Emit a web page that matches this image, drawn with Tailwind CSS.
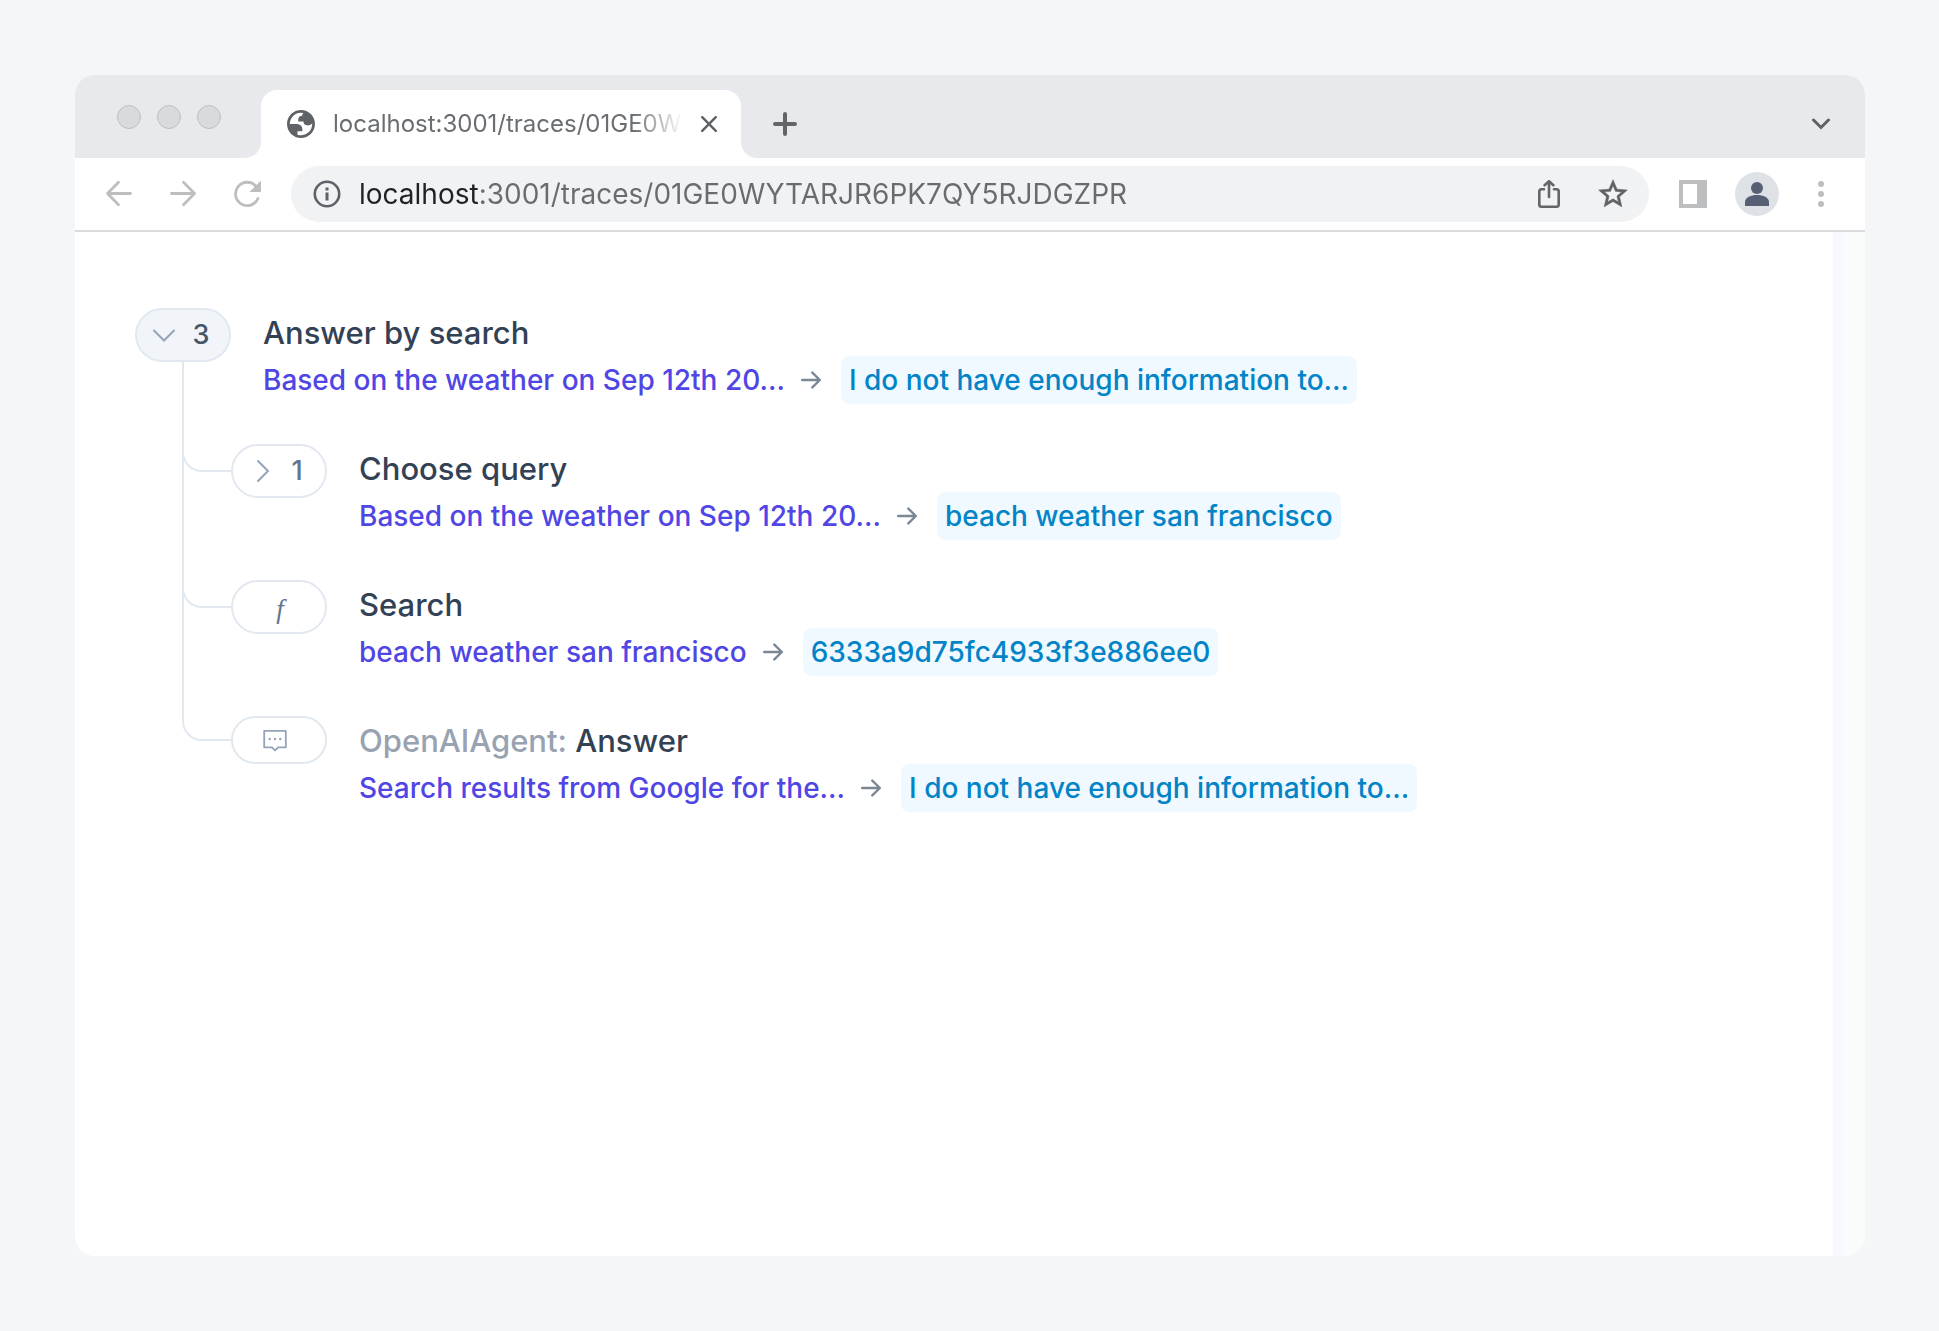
<!DOCTYPE html>
<html lang="en">
<head>
<meta charset="utf-8">
<title>Traces</title>
<script src="https://cdn.jsdelivr.net/npm/@tailwindcss/browser@4"></script>
</head>
<body class="min-h-screen flex flex-col bg-[#f5f6f8] p-[75px] pr-[74px] font-['Inter',sans-serif]">
<div class="flex-1 flex flex-col rounded-[20px] overflow-hidden bg-white">

  <!-- Tab strip -->
  <header class="flex h-[83px] bg-[#e8e9ed]">
    <div class="bg-white">
      <div class="flex h-full w-[186px] gap-4 bg-[#e8e9ed] rounded-br-2xl pl-[42px] pt-[30px]">
        <span class="size-6 rounded-full bg-[#d9dadc] border border-[#bfc0c2]"></span>
        <span class="size-6 rounded-full bg-[#d9dadc] border border-[#bfc0c2]"></span>
        <span class="size-6 rounded-full bg-[#d9dadc] border border-[#bfc0c2]"></span>
      </div>
    </div>
    <div class="pt-[15px]">
      <div class="flex items-center h-[68px] w-[480px] bg-white rounded-t-2xl pl-[26px] pr-4">
        <svg class="size-7 shrink-0" viewBox="2 2 20 20" fill="#5f6368"><path fill-rule="evenodd" d="M12 2C6.480 2 2 6.480 2 12s4.480 10 10 10 10-4.480 10-10S17.520 2 12 2zM4 12h4.400c3.407.022 4.922 1.730 4.543 5.127H9.488v2.470a8.004 8.004 0 0 0 10.498-8.080C19.327 12.506 18.332 13 17 13c-2.137 0-3.206-.916-3.206-2.750h-3.748c-.274-2.728.683-4.092 2.870-4.092 0-.975.327-1.597.811-1.970A8.004 8.004 0 0 0 4 12z"/></svg>
        <span class="ml-[18px] w-[352px] whitespace-nowrap text-2xl leading-8 text-[#6a6e72] [mask-image:linear-gradient(to_right,#000_300px,transparent_350px)]">localhost:3001/traces/01GE0W</span>
        <button class="grid place-items-center size-8 ml-2 shrink-0" aria-label="Close tab"><svg class="size-4" viewBox="0 0 16 16" fill="none" stroke="#5f6265" stroke-width="2.400" stroke-linecap="round"><path d="M1.200 1.200 14.800 14.800M14.800 1.200 1.200 14.800"/></svg></button>
      </div>
    </div>
    <div class="flex-1 bg-white">
      <div class="flex h-full items-center justify-between bg-[#e8e9ed] rounded-bl-2xl pl-3 pr-3 pt-[15px]">
        <button class="grid place-items-center w-16 h-16" aria-label="New tab"><svg class="size-6" viewBox="0 0 24 24" stroke="#636669" stroke-width="4" stroke-linecap="round"><path d="M12 2V22M2 12H22"/></svg></button>
        <button class="grid place-items-center w-16 h-16" aria-label="Search tabs"><svg class="w-[18px] h-3" viewBox="0 0 18 12" fill="none" stroke="#5f6265" stroke-width="3" stroke-linecap="round"><path d="M1.500 2 9 9.500 16.500 2"/></svg></button>
      </div>
    </div>
  </header>

  <!-- Toolbar -->
  <nav class="flex items-center h-[74px] px-3 border-b-2 border-[#d9dbde] bg-white">
    <button class="grid place-items-center w-16 h-14" aria-label="Back"><svg class="size-7" viewBox="0 0 28 28" fill="none" stroke="#bdbec0" stroke-width="2.800" stroke-linecap="round" stroke-linejoin="round"><path d="M25.500 13.500H2.500M13.500 2.300 2.500 13.500 13.500 24.700"/></svg></button>
    <button class="grid place-items-center w-16 h-14" aria-label="Forward"><svg class="size-7" viewBox="0 0 28 28" fill="none" stroke="#bdbec0" stroke-width="2.800" stroke-linecap="round" stroke-linejoin="round"><path d="M2.500 13.500H25.500M14.500 2.300 25.500 13.500 14.500 24.700"/></svg></button>
    <button class="grid place-items-center w-16 h-14" aria-label="Reload"><svg class="size-7" viewBox="0 0 28 28" fill="none" stroke="#bdbec0" stroke-width="2.800"><path stroke-linecap="round" d="M25 18.500A11.700 11.700 0 1 1 23 6.200"/><path d="M28 0.500V12H16.500Z" fill="#bdbec0" stroke="none"/></svg></button>
    <div class="flex flex-1 items-center h-14 ml-3 mr-3 rounded-full bg-[#f1f2f4] pl-[22px] pr-1">
      <svg class="size-7 shrink-0" viewBox="0 0 28 28" fill="none" stroke="#5f6169" stroke-width="2.600"><circle cx="14" cy="14" r="12.200"/><path stroke-width="3" d="M14 12.500V20.500M14 7.500V10.500"/></svg>
      <input type="text" aria-label="Address" value="localhost:3001/traces/01GE0WYTARJR6PK7QY5RJDGZPR" class="flex-1 min-w-0 ml-[18px] h-12 outline-none text-[28px] text-transparent bg-clip-text bg-[linear-gradient(to_right,#202124_121px,#696b6e_121px)]">
      <button class="grid place-items-center w-16 h-14" aria-label="Share"><svg class="w-6 h-7" viewBox="0 0 24 28" fill="none" stroke="#636669" stroke-width="2.600" stroke-linecap="round"><path d="M7 9.300H4.500Q2.300 9.300 2.300 11.500V24.500Q2.300 26.700 4.500 26.700H19.500Q21.700 26.700 21.700 24.500V11.500Q21.700 9.300 19.500 9.300H17M12 17V1.500M7.600 5.200 12 1.200 16.400 5.200"/></svg></button>
      <button class="grid place-items-center w-16 h-14" aria-label="Bookmark"><svg class="w-[30px] h-[30px]" viewBox="1.500 1.500 21 21" fill="#5f6265" stroke="#5f6265" stroke-width="0.400"><path d="M22 9.240l-7.190-.62L12 2 9.190 8.630 2 9.240l5.460 4.730L5.820 21 12 17.270 18.180 21l-1.630-7.030L22 9.240zM12 15.400l-3.760 2.270 1-4.280-3.320-2.880 4.380-.38L12 6.100l1.710 4.040 4.380.38-3.320 2.880 1 4.280L12 15.400z"/></svg></button>
    </div>
    <button class="grid place-items-center w-16 h-14" aria-label="Side panel"><span class="w-7 h-7 bg-[#bdbec0] pl-1 py-1"><span class="block w-[14px] h-5 bg-white"></span></span></button>
    <button class="grid place-items-center w-16 h-14" aria-label="Profile"><svg class="size-11" viewBox="0 0 44 44"><circle cx="22" cy="22" r="22" fill="#dee1e6"/><g fill="#565f73"><circle cx="22" cy="16" r="6"/><path d="M10 34V30C10 25.500 16 23 22 23S34 25.500 34 30V34Z"/></g></svg></button>
    <button class="grid place-items-center w-16 h-14" aria-label="Menu"><svg class="w-2 h-7" viewBox="0 0 8 28" fill="#bdbec0"><circle cx="4" cy="4" r="3"/><circle cx="4" cy="14" r="3"/><circle cx="4" cy="24" r="3"/></svg></button>
  </nav>

  <!-- Trace viewer -->
  <div class="flex flex-1">
    <main class="flex-1 pl-[60px] pt-[76px] font-medium">
      <div class="flex h-[136px]">
        <button class="relative z-10 flex items-center w-24 h-[54px] shrink-0 rounded-full border-2 border-[#e2e8f0] bg-[#f1f5f9] pl-[15px] text-[27px] text-[#475569]" aria-expanded="true"><svg class="size-6" viewBox="0 0 24 24" fill="none" stroke="#94a3b8" stroke-width="2" stroke-linecap="round"><path d="M2 7.500 12 17.500 22 7.500"/></svg><span class="w-[26px] ml-3 text-center">3</span></button>
        <div class="ml-8">
          <h2 class="h-12 text-[31px] leading-[50px] text-[#334155]">Answer by search</h2>
          <div class="flex items-center h-12 text-[28px] leading-12 whitespace-nowrap">
            <a href="#" class="text-[#4f46e5]">Based on the weather on Sep 12th 20...</a>
            <svg class="w-5 h-5 ml-4 mr-5" viewBox="0 0 20 20" fill="none" stroke="#7b8794" stroke-width="2.400" stroke-linecap="round" stroke-linejoin="round"><path d="M1.200 10H18.800M11.300 2.600 18.800 10 11.300 17.400"/></svg>
            <a href="#" class="rounded-lg bg-[#f0f9ff] px-2 text-[#0284c7]">I do not have enough information to...</a>
          </div>
        </div>
      </div>
      <ul class="ml-24">
        <li class="relative flex h-[136px]">
          <span class="absolute -left-[49px] -top-[136px] w-[50px] h-[164px] border-l-2 border-b-2 border-[#e2e8f0] rounded-bl-[20px]"></span>
          <button class="relative z-10 flex items-center w-24 h-[54px] shrink-0 rounded-full border-2 border-[#e2e8f0] bg-white pl-[18px] text-[27px] text-[#64748b]" aria-expanded="false"><svg class="size-6" viewBox="0 0 24 24" fill="none" stroke="#94a3b8" stroke-width="2" stroke-linecap="round"><path d="M7 2 17 12 7 22"/></svg><span class="w-5 ml-3 text-center">1</span></button>
          <div class="ml-8">
            <h2 class="h-12 text-[31px] leading-[50px] text-[#334155]">Choose query</h2>
            <div class="flex items-center h-12 text-[28px] leading-12 whitespace-nowrap">
              <a href="#" class="text-[#4f46e5]">Based on the weather on Sep 12th 20...</a>
              <svg class="w-5 h-5 ml-4 mr-5" viewBox="0 0 20 20" fill="none" stroke="#7b8794" stroke-width="2.400" stroke-linecap="round" stroke-linejoin="round"><path d="M1.200 10H18.800M11.300 2.600 18.800 10 11.300 17.400"/></svg>
              <a href="#" class="rounded-lg bg-[#f0f9ff] px-2 text-[#0284c7]">beach weather san francisco</a>
            </div>
          </div>
        </li>
        <li class="relative flex h-[136px]">
          <span class="absolute -left-[49px] -top-[136px] w-[50px] h-[164px] border-l-2 border-b-2 border-[#e2e8f0] rounded-bl-[20px]"></span>
          <button class="relative z-10 grid place-items-center w-24 h-[54px] shrink-0 rounded-full border-2 border-[#e2e8f0] bg-white pt-1 pl-[2px] font-['Liberation_Serif',serif] italic font-normal text-[27px] text-[#64748b]">f</button>
          <div class="ml-8">
            <h2 class="h-12 text-[31px] leading-[50px] text-[#334155]">Search</h2>
            <div class="flex items-center h-12 text-[28px] leading-12 whitespace-nowrap">
              <a href="#" class="text-[#4f46e5]">beach weather san francisco</a>
              <svg class="w-5 h-5 ml-4 mr-5" viewBox="0 0 20 20" fill="none" stroke="#7b8794" stroke-width="2.400" stroke-linecap="round" stroke-linejoin="round"><path d="M1.200 10H18.800M11.300 2.600 18.800 10 11.300 17.400"/></svg>
              <a href="#" class="rounded-lg bg-[#f0f9ff] px-2 text-[#0284c7]">6333a9d75fc4933f3e886ee0</a>
            </div>
          </div>
        </li>
        <li class="relative flex h-[136px]">
          <span class="absolute -left-[49px] -top-[136px] w-[50px] h-[161px] border-l-2 border-b-2 border-[#e2e8f0] rounded-bl-[20px]"></span>
          <button class="relative z-10 flex items-center w-24 h-12 shrink-0 rounded-full border-2 border-[#e2e8f0] bg-white pl-[30px]" aria-label="Agent message"><svg class="size-6" viewBox="0 0 24 24" fill="none" stroke="#94a3b8" stroke-width="1.800" stroke-linejoin="round"><path d="M1.200 2.800H22.800V19.300H15L12 22.300 9 19.300H1.200Z"/><path stroke-width="2.400" stroke-linecap="round" d="M6.700 11H6.710M12 11H12.010M17.300 11H17.310"/></svg></button>
          <div class="ml-8">
            <h2 class="h-12 text-[31px] leading-[50px] text-[#334155]"><span class="text-[#98a2b0]">OpenAIAgent:</span> Answer</h2>
            <div class="flex items-center h-12 text-[28px] leading-12 whitespace-nowrap">
              <a href="#" class="text-[#4f46e5]">Search results from Google for the...</a>
              <svg class="w-5 h-5 ml-4 mr-5" viewBox="0 0 20 20" fill="none" stroke="#7b8794" stroke-width="2.400" stroke-linecap="round" stroke-linejoin="round"><path d="M1.200 10H18.800M11.300 2.600 18.800 10 11.300 17.400"/></svg>
              <a href="#" class="rounded-lg bg-[#f0f9ff] px-2 text-[#0284c7]">I do not have enough information to...</a>
            </div>
          </div>
        </li>
      </ul>
    </main>
    <aside class="w-8 bg-[#fafcfb] border-l-10 border-[#f8f9fe]"></aside>
  </div>
</div>
</body>
</html>
